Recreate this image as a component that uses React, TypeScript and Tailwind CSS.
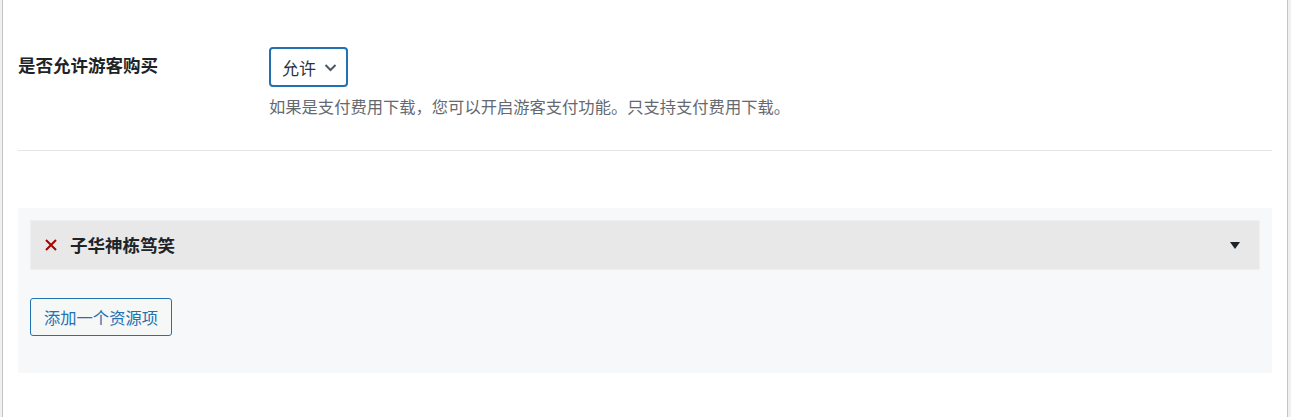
export default function App() {
  return (
    <div
      className="h-[417px] w-full bg-[#f0f0f1] pl-[2px] pr-[3px]"
      style={{ fontFamily: '"Noto Sans CJK SC", "Noto Sans", sans-serif' }}
    >
      <div className="h-full border-x border-[#c3c4c7] bg-white px-[15px]">
        {/* Guest purchase row */}
        <div className="flex pt-[47px] pb-[33px] border-b border-[#e5e5e5]">
          <div className="w-[251px] shrink-0 pt-[6px] text-[17.5px] font-bold leading-[24px] text-[#1d2327]">
            是否允许游客购买
          </div>
          <div>
            <button className="flex h-[40px] items-center gap-[8px] rounded-[4px] border-2 border-[#2271b1] pl-[11px] pr-[9px] text-[17px] text-[#2c3338]">
              <span className="leading-none">允许</span>
              <svg width="13" height="13" viewBox="0 0 13 13" fill="none" stroke="#50575e" strokeWidth="2">
                <path d="M1.5 4l5 5 5-5" />
              </svg>
            </button>
            <p className="mt-[8px] text-[16.3px] leading-[22px] text-[#646970]">
              如果是支付费用下载，您可以开启游客支付功能。只支持支付费用下载。
            </p>
          </div>
        </div>

        {/* Resources panel */}
        <div className="mt-[57px] bg-[#f7f8f9] px-[12px] pt-[12px] pb-[37px]">
          <div className="flex h-[50px] items-center border border-[#f0f0f1] bg-[#e8e8e8] pl-[14px] pr-[19px]">
            <svg width="12" height="12" viewBox="0 0 12 12" stroke="#aa0000" strokeWidth="2">
              <path d="M1 1l10 10M11 1L1 11" />
            </svg>
            <span className="ml-[13px] text-[17.5px] font-bold text-[#1d2327]">子华神栋笃笑</span>
            <svg className="ml-auto" width="10" height="7" viewBox="0 0 10 7" fill="#1d2327">
              <path d="M0 0h10L5 7z" />
            </svg>
          </div>
          <button className="mt-[28px] h-[38px] rounded-[3px] border border-[#2271b1] bg-[#f6f7f7] px-[13px] text-[16.3px] text-[#2271b1]">
            添加一个资源项
          </button>
        </div>
      </div>
    </div>
  )
}
